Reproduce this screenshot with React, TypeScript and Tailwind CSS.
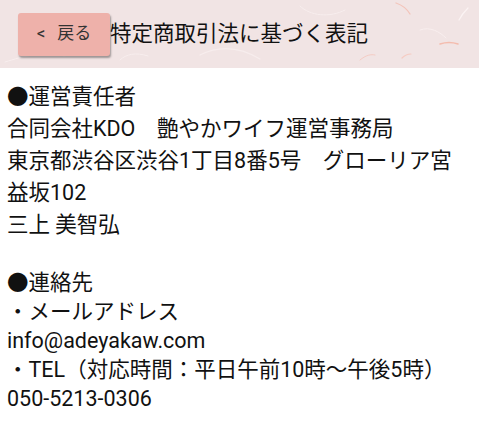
import React from 'react';

const FONT = { fontFamily: 'Roboto, "Noto Sans CJK JP", sans-serif' };

function Fibers() {
  return (
    <svg className="absolute inset-0 h-full w-full" viewBox="0 0 479 68" preserveAspectRatio="none">
      <g fill="none" strokeLinecap="round">
        <path d="M396 3c6 2 11 6 14 11" stroke="#f3c4ba" strokeWidth="1.3" />
        <path d="M440 44c6-2 12-2 18 0" stroke="#f4bcae" strokeWidth="1.5" />
        <path d="M468 8c-4 4-7 8-9 12" stroke="#fbf3f3" strokeWidth="1.2" />
        <path d="M402 58c3-3 6-4 9-4" stroke="#f6cbc2" strokeWidth="1.2" />
        <path d="M200 55c20-10 40-8 60 4" stroke="#f7eded" strokeWidth="1.2" />
        <path d="M300 6c10 10 30 12 45 4" stroke="#f8eeee" strokeWidth="1" />
        <path d="M5 62c20-6 30-10 60-6" stroke="#f8eeee" strokeWidth="1" />
        <path d="M120 60c6-6 16-8 28-4" stroke="#f8eeee" strokeWidth="1" />
        <path d="M420 30c10-4 20 2 26 8" stroke="#f9efef" strokeWidth="1" />
        <path d="M360 60c6-5 11-6 15-5" stroke="#f5ccc4" strokeWidth="1" />
      </g>
    </svg>
  );
}

export default function App() {
  return (
    <div className="h-[422px] w-[479px] overflow-hidden bg-white text-[#111]" style={FONT}>
      <header className="relative flex h-[68px] items-center bg-[#f1e4e4]">
        <Fibers />
        <button className="relative ml-[18px] flex h-[43px] w-[92px] items-center justify-center gap-[12px] rounded-[3px] bg-[#eeb1aa] text-[17px] text-[#333] shadow-[1px_2px_2px_rgba(0,0,0,0.35)]">
          <span>&lt;</span>
          <span>戻る</span>
        </button>
        <h1 className="relative text-[21.5px] leading-none">特定商取引法に基づく表記</h1>
      </header>

      <main className="px-[7px] pt-[13px] text-[21.5px]">
        <div className="leading-[32px]">
          <p>●運営責任者</p>
          <p>合同会社KDO　艶やかワイフ運営事務局</p>
          <p>東京都渋谷区渋谷1丁目8番5号　グローリア宮</p>
          <p>益坂102</p>
          <p>三上 美智弘</p>
        </div>
        <div className="mt-[27px] leading-[29px]">
          <p>●連絡先</p>
          <p>・メールアドレス</p>
          <p>info@adeyakaw.com</p>
          <p>・TEL（対応時間：平日午前10時〜午後5時）</p>
          <p>050-5213-0306</p>
        </div>
      </main>
    </div>
  );
}
